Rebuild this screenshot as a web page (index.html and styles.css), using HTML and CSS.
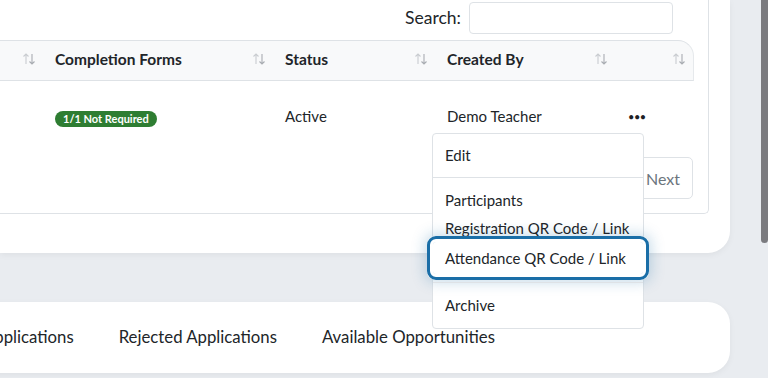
FILE: index.html
```html
<!DOCTYPE html>
<html lang="en">
<head>
    <meta charset="UTF-8">
    <meta name="viewport" content="width=device-width, initial-scale=1.0">
    <title>Opportunities</title>
    <link rel="stylesheet" href="styles.css">
</head>
<body>

<div class="page">
    <div class="content">
        <div class="card top-card">
            <div class="panel">
                <div class="search-row">
                    <label for="search">Search:</label>
                    <input type="text" id="search">
                </div>

                <table class="data-table">
                    <colgroup>
                        <col style="width: 43px">
                        <col style="width: 230px">
                        <col style="width: 162px">
                        <col style="width: 180px">
                        <col style="width: 79px">
                    </colgroup>
                    <thead>
                        <tr>
                            <th><span class="th-inner"><span></span><svg class="sort" viewBox="0 0 14 14"><path d="M4 12V2M1.5 4.5L4 2l2.5 2.5"/><path class="down" d="M10 2v10M7.5 9.5L10 12l2.5-2.5"/></svg></span></th>
                            <th><span class="th-inner"><span>Completion Forms</span><svg class="sort" viewBox="0 0 14 14"><path d="M4 12V2M1.5 4.5L4 2l2.5 2.5"/><path class="down" d="M10 2v10M7.5 9.5L10 12l2.5-2.5"/></svg></span></th>
                            <th><span class="th-inner"><span>Status</span><svg class="sort" viewBox="0 0 14 14"><path d="M4 12V2M1.5 4.5L4 2l2.5 2.5"/><path class="down" d="M10 2v10M7.5 9.5L10 12l2.5-2.5"/></svg></span></th>
                            <th><span class="th-inner"><span>Created By</span><svg class="sort" viewBox="0 0 14 14"><path d="M4 12V2M1.5 4.5L4 2l2.5 2.5"/><path class="down" d="M10 2v10M7.5 9.5L10 12l2.5-2.5"/></svg></span></th>
                            <th class="last"><span class="th-inner"><span></span><svg class="sort" viewBox="0 0 14 14"><path d="M4 12V2M1.5 4.5L4 2l2.5 2.5"/><path class="down" d="M10 2v10M7.5 9.5L10 12l2.5-2.5"/></svg></span></th>
                        </tr>
                    </thead>
                    <tbody>
                        <tr>
                            <td></td>
                            <td><span class="badge">1/1 Not Required</span></td>
                            <td>Active</td>
                            <td>Demo Teacher</td>
                            <td class="actions">
                                <span class="dots">&bull;&bull;&bull;</span>
                                <ul class="menu">
                                    <li>Edit</li>
                                    <li class="divider"></li>
                                    <li>Participants</li>
                                    <li>Registration QR Code / Link</li>
                                    <li class="focused">Attendance QR Code / Link</li>
                                    <li class="divider"></li>
                                    <li>Archive</li>
                                </ul>
                            </td>
                        </tr>
                    </tbody>
                </table>

                <div class="pagination">
                    <button>Previous</button>
                    <button class="current">1</button>
                    <button>Next</button>
                </div>
            </div>
        </div>

        <div class="card bottom-card">
            <a class="tab">Pending Applications</a>
            <a class="tab">Rejected Applications</a>
            <a class="tab">Available Opportunities</a>
        </div>
    </div>
    <div class="scrollbar"></div>
</div>

</body>
</html>
```

FILE: styles.css
```css
body {
    margin: 0;
    font-family: Lato, "Noto Sans", sans-serif;
    font-size: 15px;
    color: #212529;
    background: #e9ecf0;
    overflow: hidden;
}

.page {
    display: flex;
    height: 378px;
}

.content {
    width: 730px;
}

.scrollbar {
    width: 7px;
    height: 243px;
    margin-left: auto;
    background: #7b7b7f;
    border-radius: 0 0 4px 4px;
}

.card {
    background: #fff;
    box-shadow: 0 2px 6px rgba(0, 0, 0, 0.05);
}

.top-card {
    height: 253px;
    border-radius: 0 0 22px 0;
}

.panel {
    position: relative;
    width: 709px;
    height: 214px;
    box-sizing: border-box;
    border-right: 1px solid #dee2e6;
    border-bottom: 1px solid #dee2e6;
    border-radius: 0 0 5px 0;
}

.search-row {
    display: flex;
    justify-content: flex-end;
    align-items: center;
    gap: 8px;
    height: 40px;
    padding-right: 35px;
    box-sizing: border-box;
}

.search-row label {
    font-size: 17.5px;
    margin-top: -6px;
}

.search-row input {
    width: 204px;
    height: 32px;
    box-sizing: border-box;
    border: 1px solid #dee2e6;
    border-radius: 4px;
    margin-top: -5px;
}

.data-table {
    width: 694px;
    border-collapse: separate;
    border-spacing: 0;
    table-layout: fixed;
}

.data-table th {
    height: 41px;
    padding: 0 7px 3px 12px;
    box-sizing: border-box;
    background: #f8f9fa;
    border-top: 1px solid #dee2e6;
    border-bottom: 1px solid #dee2e6;
    text-align: left;
    font-weight: 700;
    font-size: 15.5px;
}

.data-table th.last {
    border-top-right-radius: 16px;
    border-right: 1px solid #e6e9ec;
}

.th-inner {
    display: flex;
    justify-content: space-between;
    align-items: center;
}

.sort {
    width: 14px;
    height: 14px;
    fill: none;
    stroke: #c9ccd0;
    stroke-width: 1.1;
}

.sort .down {
    stroke: #a9adb2;
}

.data-table td {
    height: 70px;
    padding: 0 12px 1px;
    vertical-align: middle;
}

.badge {
    display: inline-block;
    padding: 0 8px;
    height: 16px;
    line-height: 16px;
    border-radius: 8px;
    background: #2e7d32;
    color: #fff;
    font-size: 11px;
    font-weight: 700;
    margin-top: 6px;
}

.actions {
    position: relative;
}

.dots {
    display: block;
    padding-left: 1px;
    font-size: 11px;
    letter-spacing: -0.5px;
    color: #1e2125;
}

.menu {
    position: absolute;
    top: 52px;
    left: -183px;
    width: 210px;
    margin: 0;
    padding: 7px 0 9px;
    list-style: none;
    background: #fff;
    border: 1px solid #dee2e6;
    border-radius: 4px;
    z-index: 5;
}

.menu li {
    padding: 0 12px;
    line-height: 28px;
    white-space: nowrap;
}

.menu .divider {
    height: 1px;
    margin: 8px 0;
    padding: 0;
    background: #dee2e6;
}

.menu .focused {
    line-height: 32px;
    border-radius: 3px;
    outline: 3px solid #1a6ea7;
    outline-offset: 3px;
    box-shadow: 0 0 0 6px #fff, 0 0 14px 8px rgba(26, 110, 167, 0.25);
}

.pagination {
    display: flex;
    justify-content: flex-end;
    padding-right: 15px;
    margin-top: 5px;
}

.pagination button {
    height: 42px;
    padding: 0 12px;
    font-family: inherit;
    font-size: 16px;
    color: #6c757d;
    background: #fff;
    border: 1px solid #dee2e6;
    margin-left: -1px;
}

.pagination button:last-child {
    border-radius: 0 5px 5px 0;
}

.bottom-card {
    display: flex;
    align-items: center;
    gap: 45px;
    height: 71px;
    margin-top: 49px;
    margin-left: -80px;
    padding-bottom: 2px;
    box-sizing: border-box;
    border-radius: 0 22px 22px 0;
    font-size: 16.75px;
}

.tab {
    color: #212529;
}
```
